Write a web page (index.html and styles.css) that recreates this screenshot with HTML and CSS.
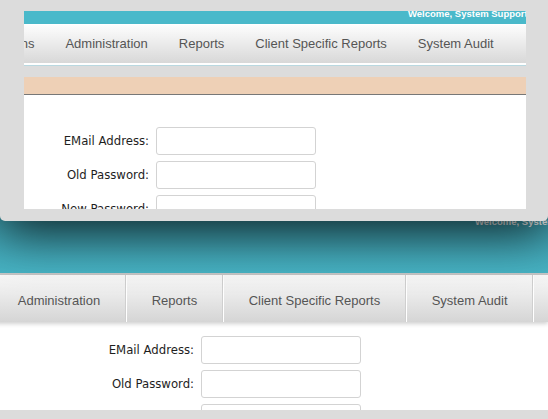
FILE: index.html
```html
<!DOCTYPE html>
<html lang="en">

<head>
    <meta charset="UTF-8">
    <title>Change Password</title>
    <link rel="stylesheet" href="styles.css">
</head>

<body>
    <div class="popup">
        <div class="site">
            <div class="topbar"><span class="welcome">Welcome, System Support</span></div>
            <ul class="menu">
                <li>Transactions</li>
                <li>Administration</li>
                <li>Reports</li>
                <li>Client Specific Reports</li>
                <li>System Audit</li>
            </ul>
            <div class="menu-line"></div>
            <div class="titlebar"></div>
            <form class="account">
                <label>EMail Address:</label>
                <input type="text">
                <label>Old Password:</label>
                <input type="password">
                <label>New Password:</label>
                <input type="password">
            </form>
        </div>
    </div>

    <div class="page">
        <div class="header"><span class="welcome">Welcome, System Support</span></div>
        <ul class="tabs">
            <li>Administration</li>
            <li>Reports</li>
            <li>Client Specific Reports</li>
            <li>System Audit</li>
            <li>Logout</li>
        </ul>
        <form class="account account-wide">
            <label>EMail Address:</label>
            <input type="text">
            <label>Old Password:</label>
            <input type="password">
            <label>New Password:</label>
            <input type="password">
        </form>
    </div>
</body>

</html>
```

FILE: styles.css
```css
    * {
        box-sizing: border-box;
    }

    body {
        margin: 0;
        height: 419px;
        overflow: hidden;
        background: #dcdcdc;
        font-family: "Liberation Sans", Arial, sans-serif;
    }

    /* window on top */
    .popup {
        position: relative;
        z-index: 2;
        height: 221px;
        padding: 11px 22px 12px 24px;
        background: #dcdcdc;
        border-radius: 0 0 5px 5px;
        box-shadow: 0 12px 50px rgba(0, 0, 0, .78);
    }

    .site {
        display: flex;
        flex-direction: column;
        height: 198px;
        overflow: hidden;
        background: #dcdcdc;
    }

    .topbar {
        height: 13px;
        flex: none;
        overflow: hidden;
        white-space: nowrap;
        background: #4ab9ca;
    }

    .welcome {
        display: block;
        color: #fff;
        font: bold 9.5px/10px "Liberation Sans", Arial, sans-serif;
    }

    .topbar .welcome {
        margin-top: -2px;
        padding-left: 384px;
    }

    .menu {
        display: flex;
        flex: none;
        height: 41px;
        margin: 0 0 0 -79px;
        padding: 0;
        list-style: none;
        white-space: nowrap;
        border-top: 1px solid #fff;
        border-bottom: 2px solid #fff;
        background: linear-gradient(#fdfdfd, #d8d8d8);
    }

    .menu li {
        flex: none;
        padding: 0 15.5px;
        line-height: 38px;
        font-size: 13px;
        color: #555;
    }

    .menu-line {
        flex: none;
        height: 1px;
        background: #b9d8e0;
    }

    .titlebar {
        flex: none;
        height: 18px;
        margin-top: 11px;
        background: #eed0b6;
        border-bottom: 1px solid #777;
    }

    /* password form */
    .account {
        flex: 1;
        display: grid;
        grid-template-columns: 125px 160px;
        grid-auto-rows: 28px;
        column-gap: 7px;
        row-gap: 6px;
        align-items: center;
        margin: 0;
        padding-top: 32px;
        background: #fff;
    }

    .account label {
        text-align: right;
        font: 11.7px "DejaVu Sans", sans-serif;
        color: #1e1e1e;
    }

    .account input {
        width: 160px;
        height: 28px;
        padding: 0 5px;
        border: 1px solid #d3d3d3;
        border-radius: 3px;
        background: #fff;
    }

    /* page underneath */
    .page {
        display: flex;
        flex-direction: column;
        height: 201px;
        margin-top: -12px;
        overflow: hidden;
        background: #fff;
    }

    .header {
        flex: none;
        height: 66px;
        padding-top: 8px;
        overflow: hidden;
        white-space: nowrap;
        background: linear-gradient(#3e9eae, #47b3c4);
        border-bottom: 2px solid #c9c9c9;
    }

    .header .welcome {
        padding-left: 475px;
    }

    .tabs {
        position: relative;
        z-index: 1;
        display: flex;
        flex: none;
        height: 47px;
        margin: 0 0 0 -8px;
        padding: 0;
        list-style: none;
        white-space: nowrap;
        background: linear-gradient(#f9f9f9, #d5d5d5);
        box-shadow: 0 2px 4px rgba(0, 0, 0, .18);
    }

    .tabs li {
        flex: none;
        padding: 4px 24.75px 0;
        line-height: 43px;
        font-size: 13px;
        color: #555;
        border-left: 1px solid #fff;
        border-right: 1px solid #cfcfcf;
    }

    .account-wide {
        grid-template-columns: 194px 160px;
        padding-top: 14px;
    }
```
